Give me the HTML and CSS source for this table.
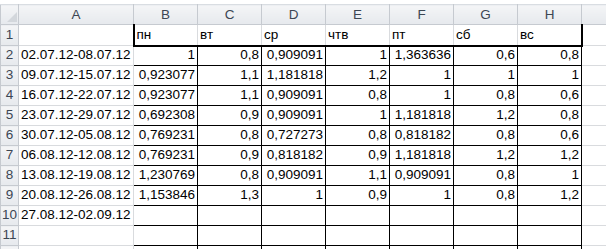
FILE: index.html
```html
<!DOCTYPE html>
<html lang="ru">
<head>
    <meta charset="UTF-8">
    <title>Лист1</title>
    <link rel="stylesheet" href="styles.css">
</head>
<body>
    <div class="formula-edge"></div>
    <table class="sheet">
        <colgroup>
            <col class="col-rowhead">
            <col class="col-a">
            <col class="col-day"><col class="col-day"><col class="col-day"><col class="col-day">
            <col class="col-day"><col class="col-day"><col class="col-day">
            <col>
        </colgroup>
        <thead>
            <tr>
                <th class="corner">
                    <svg width="14" height="14" viewBox="0 0 14 14"><polygon points="13,3 13,13 3,13" fill="#d3d7dc"/></svg>
                </th>
                <th>A</th><th>B</th><th>C</th><th>D</th><th>E</th><th>F</th><th>G</th><th>H</th><th></th>
            </tr>
        </thead>
        <tbody>
            <tr class="row-title">
                <th>1</th><td></td>
                <td>пн</td><td>вт</td><td>ср</td><td>чтв</td><td>пт</td><td>сб</td><td>вс</td><td></td>
            </tr>
            <tr class="row-data">
                <th>2</th><td>02.07.12-08.07.12</td>
                <td>1</td><td>0,8</td><td>0,909091</td><td>1</td><td>1,363636</td><td>0,6</td><td>0,8</td><td></td>
            </tr>
            <tr class="row-data">
                <th>3</th><td>09.07.12-15.07.12</td>
                <td>0,923077</td><td>1,1</td><td>1,181818</td><td>1,2</td><td>1</td><td>1</td><td>1</td><td></td>
            </tr>
            <tr class="row-data">
                <th>4</th><td>16.07.12-22.07.12</td>
                <td>0,923077</td><td>1,1</td><td>0,909091</td><td>0,8</td><td>1</td><td>0,8</td><td>0,6</td><td></td>
            </tr>
            <tr class="row-data">
                <th>5</th><td>23.07.12-29.07.12</td>
                <td>0,692308</td><td>0,9</td><td>0,909091</td><td>1</td><td>1,181818</td><td>1,2</td><td>0,8</td><td></td>
            </tr>
            <tr class="row-data">
                <th>6</th><td>30.07.12-05.08.12</td>
                <td>0,769231</td><td>0,8</td><td>0,727273</td><td>0,8</td><td>0,818182</td><td>0,8</td><td>0,6</td><td></td>
            </tr>
            <tr class="row-data">
                <th>7</th><td>06.08.12-12.08.12</td>
                <td>0,769231</td><td>0,9</td><td>0,818182</td><td>0,9</td><td>1,181818</td><td>1,2</td><td>1,2</td><td></td>
            </tr>
            <tr class="row-data">
                <th>8</th><td>13.08.12-19.08.12</td>
                <td>1,230769</td><td>0,8</td><td>0,909091</td><td>1,1</td><td>0,909091</td><td>0,8</td><td>1</td><td></td>
            </tr>
            <tr class="row-data">
                <th>9</th><td>20.08.12-26.08.12</td>
                <td>1,153846</td><td>1,3</td><td>1</td><td>0,9</td><td>1</td><td>0,8</td><td>1,2</td><td></td>
            </tr>
            <tr class="row-data">
                <th>10</th><td>27.08.12-02.09.12</td>
                <td></td><td></td><td></td><td></td><td></td><td></td><td></td><td></td>
            </tr>
            <tr class="row-data">
                <th>11</th><td></td>
                <td></td><td></td><td></td><td></td><td></td><td></td><td></td><td></td>
            </tr>
            <!-- row 12 is cut by the window edge, only its top shows -->
            <tr class="row-data">
                <th></th><td></td>
                <td></td><td></td><td></td><td></td><td></td><td></td><td></td><td></td>
            </tr>
        </tbody>
    </table>
</body>
</html>
```

FILE: styles.css
```css
body {
    margin: 0;
    background: #fff;
    overflow: hidden;
    font-family: "Liberation Sans", Arial, sans-serif;
    font-size: 13.5px;
    color: #000;
}

.formula-edge {
    height: 4px;
    background: #fff;
}

.sheet {
    table-layout: fixed;
    width: 620px;
    border-collapse: collapse;
}

.col-rowhead { width: 18px; }
.col-a { width: 115px; }
.col-day { width: 64px; }

th, td {
    padding: 0 2px 2px;
    white-space: nowrap;
    overflow: hidden;
    vertical-align: bottom;
    line-height: 16px;
}

/* column and row headings */
thead th, tbody th {
    background: linear-gradient(#f4f5f7, #e6e9ed);
    border: 1px solid #c6cad0;
    color: #3c4653;
    font-weight: normal;
    text-align: center;
    padding: 0 0 2px;
}

thead tr { height: 20px; }
thead th {
    border-top-color: #d9dde2;
    padding: 0 0 1px;
}

.corner {
    text-align: right;
    vertical-align: bottom;
}

.corner svg {
    display: block;
    margin-left: auto;
}

tbody td {
    border: 1px solid #d9dbde;
    text-align: left;
}

tbody tr { height: 20px; }
.row-title { height: 21px; }

/* titles of the weekdays */
.row-title td:nth-child(n+3):nth-child(-n+9) {
    border-bottom: 2px solid #000;
}
.row-title td:nth-child(3) { border-left: 2px solid #000; }
.row-title td:nth-child(9) { border-right: 2px solid #000; }

/* the box of coefficients */
.row-data td:nth-child(n+3):nth-child(-n+9) {
    border: 1px solid #000;
    text-align: right;
}
.row-data td:nth-child(3) { border-left: 2px solid #000; }
.row-data td:nth-child(9) { border-right: 2px solid #000; }
.row-title + .row-data td:nth-child(n+3):nth-child(-n+9) { border-top: 2px solid #000; }
```
